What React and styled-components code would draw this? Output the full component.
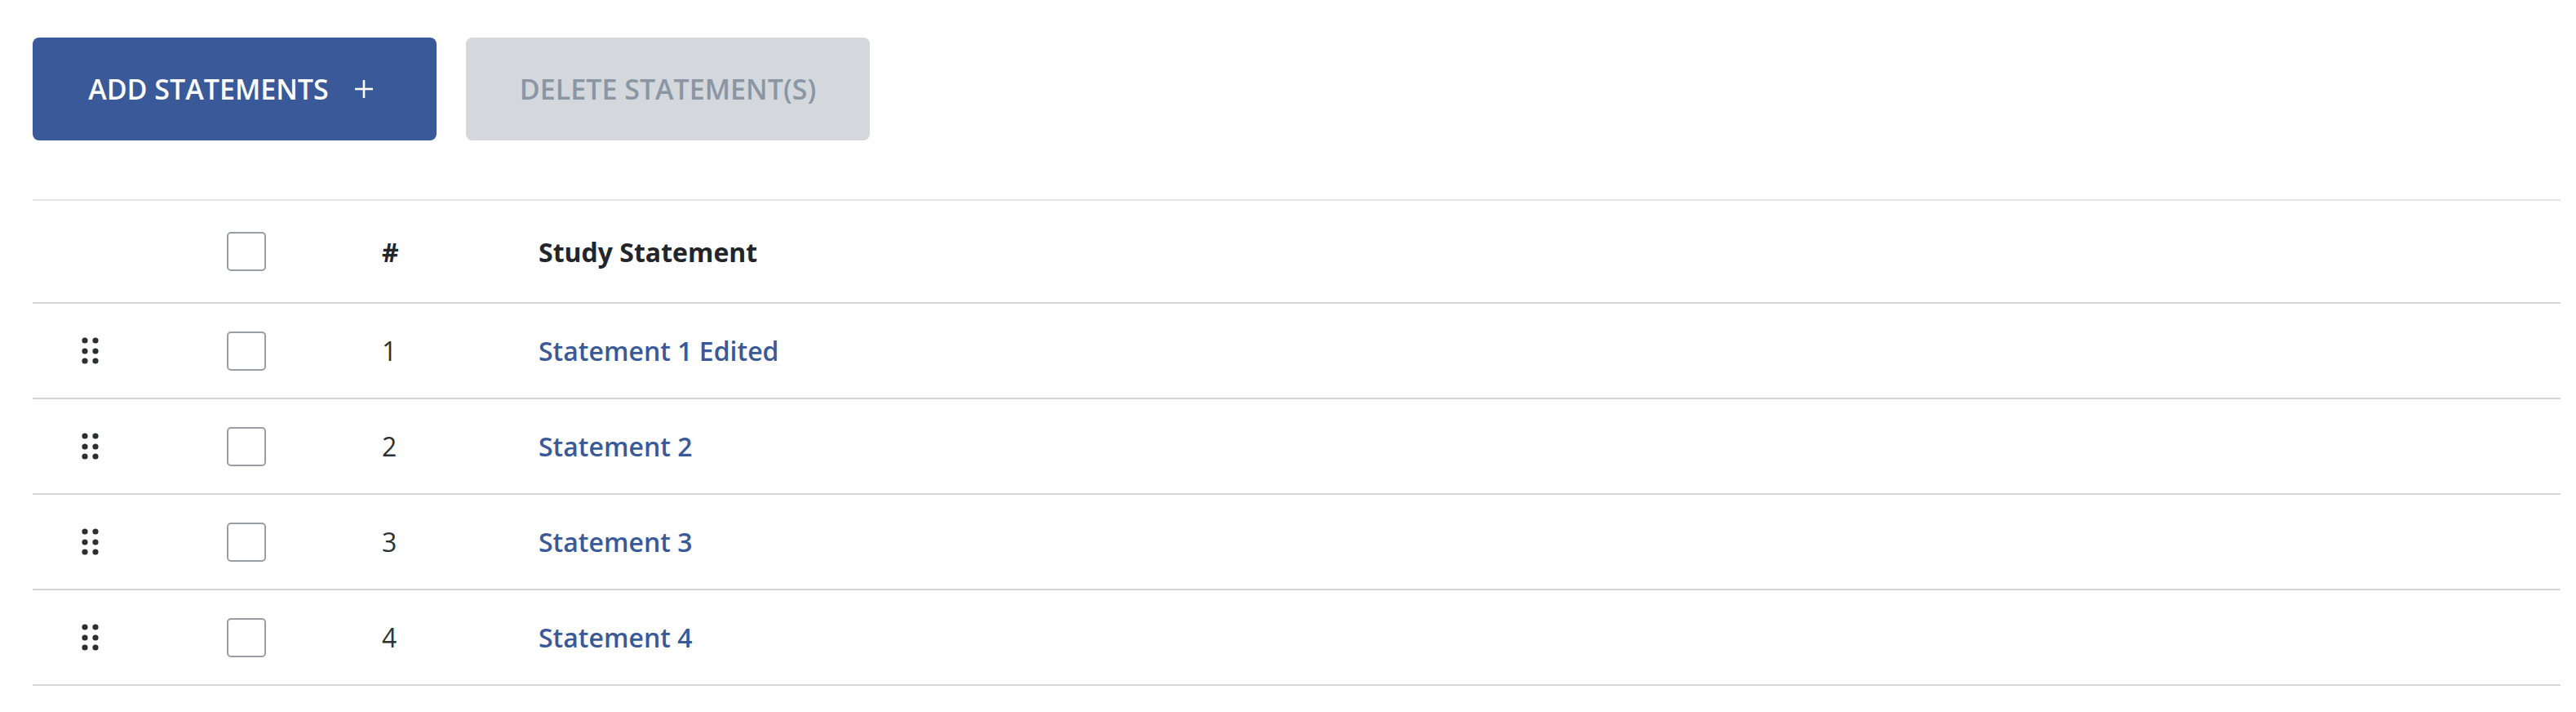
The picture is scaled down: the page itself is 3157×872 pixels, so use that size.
import React from "react";
import styled, { createGlobalStyle } from "styled-components";

const GlobalStyle = createGlobalStyle`
  body {
    margin: 0;
    background: #ffffff;
    font-family: "Open Sans", "Noto Sans", sans-serif;
  }
`;

const Page = styled.div`
  padding: 46px 19px 0 40px;
`;

const Toolbar = styled.div`
  display: flex;
  gap: 36px;
  margin-bottom: 72px;
`;

const Button = styled.button`
  display: flex;
  align-items: center;
  justify-content: center;
  gap: 32px;
  width: 495px;
  height: 126px;
  border: none;
  border-radius: 8px;
  font-family: "Open Sans", sans-serif;
  font-size: 34px;
  font-weight: 600;
  background: ${(p) => (p.disabled ? "#d4d8dc" : "#3a5998")};
  color: ${(p) => (p.disabled ? "#8a96a3" : "#ffffff")};
  padding: 0 ${(p) => (p.disabled ? "0" : "10px")} 0 0;
`;

const Table = styled.div`
  border-top: 2px solid #e3e3e3;
`;

const Row = styled.div`
  display: grid;
  grid-template-columns: 198px 190px 192px 1fr;
  align-items: center;
  height: ${(p) => (p.header ? "124px" : "115px")};
  border-bottom: 2px solid #d6d6d6;
`;

const Cell = styled.div`
  display: flex;
  align-items: center;
  padding-left: ${(p) => (p.first ? "60px" : "40px")};
  font-size: 32px;
  font-weight: ${(p) => (p.head ? 700 : 400)};
  color: ${(p) => (p.head ? "#222529" : "#2e3236")};
`;

const Link = styled.span`
  font-size: 32px;
  font-weight: 600;
  color: #3a5998;
`;

const Check = styled.span`
  display: block;
  width: 44px;
  height: 44px;
  border: 2px solid #979ea5;
  border-radius: 5px;
  background: #fff;
`;

const Grip = () => (
  <svg width="22" height="34" viewBox="0 0 22 34" fill="#2b2f33">
    {[4, 17, 29].map((y) =>
      [4, 17].map((x) => <circle key={`${x}-${y}`} cx={x} cy={y} r="3.6" />)
    )}
  </svg>
);

const Plus = () => (
  <svg width="22" height="22" viewBox="0 0 22 22" stroke="#fff" strokeWidth="2.6">
    <line x1="11" y1="0" x2="11" y2="22" />
    <line x1="0" y1="11" x2="22" y2="11" />
  </svg>
);

const statements = ["Statement 1 Edited", "Statement 2", "Statement 3", "Statement 4"];

export default function App() {
  return (
    <Page>
      <GlobalStyle />
      <Toolbar>
        <Button>
          ADD STATEMENTS <Plus />
        </Button>
        <Button disabled>DELETE STATEMENT(S)</Button>
      </Toolbar>
      <Table>
        <Row header>
          <Cell first />
          <Cell>
            <Check />
          </Cell>
          <Cell head>#</Cell>
          <Cell head>Study Statement</Cell>
        </Row>
        {statements.map((s, i) => (
          <Row key={s}>
            <Cell first>
              <Grip />
            </Cell>
            <Cell>
              <Check />
            </Cell>
            <Cell>{i + 1}</Cell>
            <Cell>
              <Link>{s}</Link>
            </Cell>
          </Row>
        ))}
      </Table>
    </Page>
  );
}
